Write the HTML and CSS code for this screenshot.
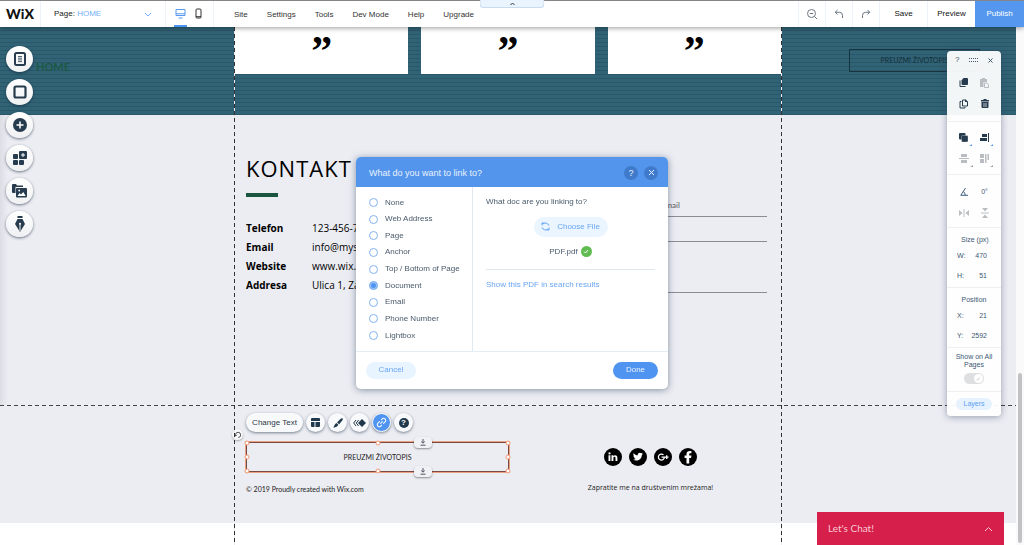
FILE: index.html
```html
<!DOCTYPE html>
<html lang="en">
<head>
<meta charset="utf-8">
<title>Wix Editor</title>
<link rel="stylesheet" href="styles.css">
</head>
<body>
<header class="topbar">
  <a class="logo" href="#">WiX</a>
  <button class="page-picker"><span><b>Page:</b> HOME</span>
    <svg width="8" height="5" viewBox="0 0 8 5"><path d="M1 1l3 3 3-3" class="line"/></svg></button>
  <div class="devices">
    <button class="device active" aria-label="Desktop"><svg width="11" height="11" viewBox="0 0 11 11"><path d="M1 1.5h9v6H1zM1 5.8h9M3.5 10h4" class="line"/></svg></button>
    <button class="device" aria-label="Mobile"><svg width="7" height="11" viewBox="0 0 7 11"><rect x="1" y="1" width="5" height="9" rx="1" class="line"/><path d="M1 8.7h5" class="line"/></svg></button>
  </div>
  <nav class="menu">
    <a href="#">Site</a><a href="#">Settings</a><a href="#">Tools</a><a href="#">Dev Mode</a><a href="#">Help</a><a href="#">Upgrade</a>
  </nav>
  <div class="actions">
    <button class="icon-action" aria-label="Zoom out"><svg width="12" height="12" viewBox="0 0 12 12"><circle cx="5.5" cy="5.5" r="4" class="line"/><path d="M8.5 8.5l2.5 2.5M3.8 5.5h3.4" class="line"/></svg></button>
    <button class="icon-action" aria-label="Undo"><svg width="10" height="10" viewBox="0 0 10 10"><path d="M3.5 1L1.2 3.3l2.3 2.2M1.5 3.3h4Q8.5 3.3 8.5 6.3V9" class="line"/></svg></button>
    <button class="icon-action" aria-label="Redo"><svg width="10" height="10" viewBox="0 0 10 10"><path d="M6.5 1l2.3 2.3-2.3 2.2M8.5 3.3h-4Q1.5 3.3 1.5 6.3V9" class="line"/></svg></button>
    <button class="text-action">Save</button>
    <button class="text-action">Preview</button>
    <button class="publish">Publish</button>
  </div>
  <button class="pull-tab" aria-label="Collapse"><svg width="6" height="4" viewBox="0 0 6 4"><path d="M1 3l2-2 2 2" class="line"/></svg></button>
</header>

<div class="workspace">
  <main class="site">
    <section class="band">
      <div class="band-left"><a class="home" href="#">HOME</a></div>
      <div class="quotes"><div class="quote">”</div><div class="quote">”</div><div class="quote">”</div></div>
      <div class="band-right"><a class="cv" href="#">PREUZMI ŽIVOTOPIS</a></div>
    </section>

    <section class="contact">
      <div class="contact-inner">
        <div>
          <h1 class="title">KONTAKT</h1>
          <div class="bar"></div>
          <dl class="details">
            <dt>Telefon</dt><dd>123-456-7890</dd>
            <dt>Email</dt><dd>info@mysite.com</dd>
            <dt>Website</dt><dd>www.wix.com</dd>
            <dt>Addresa</dt><dd>Ulica 1, Zagreb</dd>
          </dl>
        </div>
        <form class="form">
          <input class="field half" aria-label="Email" placeholder="Email">
          <input class="field" aria-label="Subject">
          <textarea class="field area" aria-label="Message"></textarea>
        </form>
      </div>
    </section>

    <footer class="foot">
      <div class="foot-inner">
        <div class="foot-left">
          <div class="tools">
            <button class="pill-tool">Change Text</button>
            <button class="round" aria-label="Layout"><svg width="9" height="9" viewBox="0 0 9 9"><path d="M1 0h7a1 1 0 0 1 1 1v2H0V1a1 1 0 0 1 1-1zM0 4h3.5v5H1a1 1 0 0 1-1-1zM4.5 4H9v4a1 1 0 0 1-1 1H4.5z"/></svg></button>
            <button class="round" aria-label="Design"><svg width="10" height="10" viewBox="0 0 10 10"><path d="M9.6.4c.5.5.3 1.200-.2 1.900L6.200 6.200 4 4.400 7.700.7C8.400.1 9.100 0 9.600.4zM3.400 5l2 1.700C4.800 8.300 3 9.200.2 9.800 1.200 8.600 1.500 5.700 3.400 5z"/></svg></button>
            <button class="round" aria-label="Animation"><svg width="13" height="8" viewBox="0 0 13 8"><path d="M9 0l4 4-4 4-4-4z"/><path d="M3 1L.7 4 3 7M5.6 1L3.3 4l2.300 3" class="line"/></svg></button>
            <button class="round on" aria-label="Link"><svg width="11" height="11" viewBox="0 0 11 11"><g transform="rotate(-45 5.5 5.5)" class="line"><path d="M5 3.500H2.500a2 2 0 0 0 0 4H4M6 7.500h2.500a2 2 0 0 0 0-4H7M3.800 5.500h3.400"/></g></svg></button>
            <button class="round" aria-label="Help"><span class="help-dot">?</span></button>
          </div>
          <div class="selected">
            <a class="selected-link" href="#">PREUZMI ŽIVOTOPIS</a>
            <i class="knob tl"></i><i class="knob tc"></i><i class="knob tr"></i><i class="knob ml"></i><i class="knob mr"></i><i class="knob bl"></i><i class="knob bc"></i><i class="knob br"></i>
            <button class="stretch up" aria-label="Attach top"><svg width="6" height="7" viewBox="0 0 6 7"><path d="M3 0v4M1.200 2.500L3 4.200l1.800-1.700M.5 6.200h5" class="line"/></svg></button>
            <button class="stretch down" aria-label="Attach bottom"><svg width="6" height="7" viewBox="0 0 6 7"><path d="M3 0v4M1.200 2.500L3 4.200l1.800-1.700M.5 6.200h5" class="line"/></svg></button>
            <button class="rotate" aria-label="Rotate"><svg width="8" height="8" viewBox="0 0 8 8"><path d="M1.500 5V3.800a2.600 2.600 0 1 1 2.800 2.700M.3 3.800l1.200 1.400 1.300-1.400" class="line"/></svg></button>
          </div>
          <p class="copy">© 2019 Proudly created with Wix.com</p>
        </div>
        <div class="foot-right">
          <div class="social">
            <a class="soc" href="#" aria-label="LinkedIn"><svg width="18" height="18" viewBox="0 0 18 18"><path d="M4.500 7.300h1.900V13H4.500zM7.500 7.300h1.800v.8c.9-1.400 4.100-1.300 4.100 1.500V13h-1.900V10c0-1.600-2.100-1.400-2.100 0v3H7.500z"/><circle cx="5.500" cy="5.400" r="1.100"/></svg></a>
            <a class="soc" href="#" aria-label="Twitter"><svg width="18" height="18" viewBox="0 0 18 18"><path d="M4.600 5.200c1.100 1.300 2.500 2 4.200 2.100-.5-2.200 2-3.500 3.500-2l1.400-.5-.9 1.200 1.200-.3-1.200 1.200c.1 4-4.400 7.200-8.800 4.900 1.100.1 2-.2 2.800-.8-.9-.1-1.500-.6-1.800-1.400h.8C4.900 9.200 4.400 8.500 4.400 7.500l.8.3c-.9-.7-1.100-1.700-.6-2.600z"/></svg></a>
            <a class="soc" href="#" aria-label="Google Plus"><svg width="18" height="18" viewBox="0 0 18 18"><path d="M9.500 6.900a3 3 0 1 0 .9 2.300H7.500M12.700 7.300v3.600M10.900 9.100h3.600" fill="none" stroke="#fff" stroke-width="1.300"/></svg></a>
            <a class="soc" href="#" aria-label="Facebook"><svg width="18" height="18" viewBox="0 0 18 18"><path d="M7.500 15.500V10H5.600V7.600h1.900V6.200c0-2.700 1.700-3.700 4.900-3.200v2.200c-1.500-.1-2.200-.1-2.200 1.100v1.300h2.200L12.100 10h-1.900v5.500z"/></svg></a>
          </div>
          <p class="follow">Zapratite me na društvenim mrežama!</p>
        </div>
      </div>
    </footer>
    <div class="below"></div>
    <div class="guides"></div>
  </main>
  <div class="scroll"><div class="thumb"></div></div>
</div>

<aside class="side">
  <button class="side-btn" aria-label="Pages"><svg width="14" height="14" viewBox="0 0 14 14"><rect x="2" y="1" width="10" height="12" rx="1.5" fill="none" stroke="currentColor" stroke-width="2"/><path d="M5 4.500h4M5 6.200h4M5 7.900h4M5 9.600h4" stroke="currentColor" stroke-width=".8"/></svg></button>
  <button class="side-btn" aria-label="Background"><svg width="14" height="14" viewBox="0 0 14 14"><rect x="1.500" y="1.500" width="11" height="11" rx="1.5" fill="none" stroke="currentColor" stroke-width="2.200"/></svg></button>
  <button class="side-btn" aria-label="Add"><svg width="14" height="14" viewBox="0 0 14 14"><circle cx="7" cy="7" r="7"/><path d="M7 3.500v7M3.500 7h7" stroke="#fff" stroke-width="1.500"/></svg></button>
  <button class="side-btn" aria-label="Apps"><svg width="14" height="14" viewBox="0 0 14 14"><rect y="3" width="5" height="5" rx="1"/><rect y="9" width="5" height="5" rx="1"/><rect x="6" y="9" width="5" height="5" rx="1"/><rect x="6" width="8" height="8" rx="1"/><path d="M10 2v4M8 4h4" stroke="#fff"/></svg></button>
  <button class="side-btn" aria-label="Media"><svg width="15" height="14" viewBox="0 0 15 14"><path d="M0 1a1 1 0 0 1 1-1h3l1 1.500h6V3H3.500v6H1a1 1 0 0 1-1-1z"/><rect x="4" y="4" width="11" height="9.500" rx="1"/><path d="M5.500 12l2.200-3 1.300 1.500L11.300 8l2.400 4z" fill="#fff"/><circle cx="7.200" cy="6.500" r=".9" fill="#fff"/></svg></button>
  <button class="side-btn" aria-label="Blog"><svg width="10" height="16" viewBox="0 0 10 16"><path d="M2.500 0h5v2h-5zM2.500 3h5L10 8l-5 8-5-8z"/><path d="M5 15V8" stroke="#fff" stroke-width=".9"/><circle cx="5" cy="7.700" r="1" fill="#fff"/></svg></button>
</aside>

<aside class="panel">
  <div class="panel-head"><button aria-label="Help">?</button>
    <svg width="9" height="4" viewBox="0 0 9 4"><path d="M0 .5h9M0 3.500h9" stroke="currentColor" stroke-dasharray="1 1"/></svg>
    <button aria-label="Close"><svg width="5" height="5" viewBox="0 0 5 5"><path d="M.5.5l4 4M4.500.5l-4 4" class="line"/></svg></button></div>
  <div class="panel-grid first">
    <button aria-label="Copy"><svg width="9" height="10" viewBox="0 0 9 10"><path d="M1 2.500v6h5.500" class="line"/><path d="M2.500 2.500L4.500 0H8a1 1 0 0 1 1 1v5a1 1 0 0 1-1 1H3.500a1 1 0 0 1-1-1z"/></svg></button>
    <button class="off" aria-label="Paste"><svg width="9" height="10" viewBox="0 0 9 10"><path d="M0 1h2V0h3v1h2v3H3.500v5H0z"/><path d="M4.500 5H7l1.500 1.500v3h-4z" class="line"/></svg></button>
    <button aria-label="Duplicate"><svg width="9" height="10" viewBox="0 0 9 10"><path d="M3.500 1H6.500l2 2v4h-5zM2.500 2.500H1v6.500h5V8" class="line"/><path d="M6 0l3 3H6z"/></svg></button>
    <button aria-label="Delete"><svg width="8" height="9" viewBox="0 0 8 9"><path d="M0 1h2.500V0h3v1H8v1.500H0zM.5 3h7v5a1 1 0 0 1-1 1h-5a1 1 0 0 1-1-1z"/><path d="M3 4v4M5 4v4" stroke="#fff" stroke-width=".7"/></svg></button>
  </div>
  <div class="panel-grid">
    <button class="more" aria-label="Arrange"><svg width="9" height="9" viewBox="0 0 9 9"><rect width="6.500" height="6.500" rx="1"/><rect x="2.500" y="2.500" width="6.500" height="6.500" rx="1" stroke="#fff" stroke-width=".3"/></svg></button>
    <button class="more" aria-label="Align"><svg width="9" height="9" viewBox="0 0 9 9"><path d="M8 0h1v9H8zM2 1h5v3H2zM0 5h7v3H0z"/></svg></button>
    <button class="more off" aria-label="Distribute"><svg width="10" height="9" viewBox="0 0 10 9"><path d="M2 0h6v3H2zM0 4h10v1H0zM2 6h6v3H2z"/></svg></button>
    <button class="more off" aria-label="Match size"><svg width="9" height="9" viewBox="0 0 9 9"><path d="M0 0h4v4H0zM0 5h4v4H0zM5 0h1.500v9H5zM7.500 0H9v6H7.500z"/></svg></button>
  </div>
  <div class="panel-grid">
    <button class="blue" aria-label="Angle"><svg width="8" height="8" viewBox="0 0 8 8"><path d="M5.500 0L.8 7.300H8M3.300 3.500q2 1.500 1.800 3.700" class="line"/></svg></button>
    <input class="num" aria-label="Rotation" value="0°">
    <button class="off" aria-label="Flip horizontal"><svg width="10" height="8" viewBox="0 0 10 8"><path d="M0 1l3.500 3L0 7zM10 1L6.500 4 10 7zM4.500 0h1v8h-1z"/></svg></button>
    <button class="off" aria-label="Flip vertical"><svg width="8" height="10" viewBox="0 0 8 10"><path d="M1 0h6L4 3.500zM1 10h6L4 6.500zM0 4.500h8v1H0z"/></svg></button>
  </div>
  <div class="panel-box"><div class="panel-title">Size (px)</div>
    <label>W:<input class="num" value="470"></label><label>H:<input class="num" value="51"></label></div>
  <div class="panel-box"><div class="panel-title">Position</div>
    <label>X:<input class="num" value="21"></label><label>Y:<input class="num" value="2592"></label></div>
  <div class="panel-show"><label for="all-pages">Show on All Pages</label><input class="toggle" type="checkbox" id="all-pages"></div>
  <div class="panel-foot"><button class="layers">Layers</button></div>
</aside>

<div class="overlay">
  <div class="dialog" role="dialog" aria-labelledby="dialog-title">
    <div class="dialog-head"><span id="dialog-title">What do you want to link to?</span>
      <button class="dot" aria-label="Help">?</button>
      <button class="dot" aria-label="Close"><svg width="7" height="7" viewBox="0 0 7 7"><path d="M1 1l5 5M6 1L1 6" class="line"/></svg></button></div>
    <div class="dialog-body">
      <div class="choices">
        <label><input type="radio" name="t">None</label>
        <label><input type="radio" name="t">Web Address</label>
        <label><input type="radio" name="t">Page</label>
        <label><input type="radio" name="t">Anchor</label>
        <label><input type="radio" name="t">Top / Bottom of Page</label>
        <label><input type="radio" name="t" checked>Document</label>
        <label><input type="radio" name="t">Email</label>
        <label><input type="radio" name="t">Phone Number</label>
        <label><input type="radio" name="t">Lightbox</label>
      </div>
      <div class="doc">
        <div class="doc-q">What doc are you linking to?</div>
        <button class="choose"><svg width="9" height="9" viewBox="0 0 9 9"><path d="M1 3.500V1h2.500M1 1l1 1a3.600 3.600 0 0 1 5.900 1.600M8 5.500V8H5.500M8 8L7 7A3.600 3.600 0 0 1 1.100 5.400" class="line"/></svg>Choose File</button>
        <div class="file">PDF.pdf<span class="ok"><svg width="6" height="5" viewBox="0 0 6 5"><path d="M1 2.500L2.500 4 5 1" class="line"/></svg></span></div>
        <a class="show" href="#">Show this PDF in search results</a>
      </div>
    </div>
    <div class="dialog-foot"><button class="btn cancel">Cancel</button><button class="btn done">Done</button></div>
  </div>
</div>

<button class="chat">Let's Chat!<svg width="9" height="6" viewBox="0 0 9 6"><path d="M1 5l3.500-3.500L8 5" class="line"/></svg></button>
</body>
</html>
```

FILE: styles.css
```css
* { box-sizing: border-box; }
body { margin: 0; min-height: 100vh; display: flex; flex-direction: column; font: 8px/14px "Liberation Sans", sans-serif; color: #2b3a48; background: #fff; overflow: hidden; }
button { border: 0; padding: 0; background: none; font: inherit; color: inherit; display: flex; align-items: center; justify-content: center; }
a { color: inherit; text-decoration: none; }
p, h1, dl, dd { margin: 0; }
svg { display: block; fill: currentColor; flex: none; }
.line { fill: none; stroke: currentColor; }

/* top bar */
.topbar { position: relative; z-index: 3; display: flex; height: 27px; border-top: 1px solid #858589; background: #fff; box-shadow: 0 1px 5px rgba(0, 0, 0, .4); }
.logo { width: 41px; border-right: 1px solid #edf3f8; font: 900 14px/26px Lato, sans-serif; color: #111; text-align: center; }
.page-picker { width: 125px; padding: 0 13px; justify-content: space-between; border-right: 1px solid #edf3f8; color: #75b0f8; }
.page-picker b { font-weight: 400; color: #222; }
.devices { display: flex; gap: 5px; width: 48px; padding-left: 8px; border-right: 1px solid #edf3f8; }
.device { width: 13px; border-bottom: 2px solid transparent; color: #333; }
.device.active { border-color: #4c94f2; color: #5899f0; }
.menu { display: flex; gap: 19px; padding-left: 20px; line-height: 27px; color: #333; }
.actions { display: flex; margin-left: auto; }
.icon-action { width: 27px; border-left: 1px solid #edf3f8; color: #6a7682; }
.text-action { width: 48px; border-left: 1px solid #edf3f8; color: #111; }
.publish { width: 49px; background: #5597ee; color: #fff; }
.pull-tab { position: absolute; top: -1px; left: 50%; width: 65px; height: 8px; transform: translateX(-50%); border: 1px solid #c9dcf0; border-top: 0; border-radius: 0 0 4px 4px; background: #eaf4fe; }

/* site canvas */
.workspace { flex: 1; display: flex; }
.site { position: relative; flex: 1; display: flex; flex-direction: column; }
.band { display: grid; grid-template-columns: 1fr 546px 1fr; height: 88px; background: repeating-linear-gradient(#316376 0 3px, #2b5869 3px 4px); }
.band-left { padding: 32px 0 0 36px; }
.home { font: bold 11px/16px Lato, sans-serif; color: #1b5946; }
.quotes { display: grid; grid-template-columns: 1fr 1fr 1fr; gap: 13px; align-items: start; }
.quote { height: 47px; padding-top: 1px; background: #fff; color: #000; text-align: center; font: bold 42px/46px "Liberation Serif", serif; }
.band-right { padding: 22px 0 0 68px; }
.cv { display: block; width: 131px; border: 1px solid #173340; color: #14303b; text-align: center; font: 7px/21px Lato, sans-serif; }
.contact { padding: 38px 0 110px; background: linear-gradient(90deg, #dcdee5, #ecedf3 8px); }
.contact-inner { width: 546px; margin: auto; padding: 0 14px 0 11px; display: grid; grid-template-columns: 1fr 246px; }
.title { font: 400 22px/30px "Open Sans", sans-serif; letter-spacing: 1px; color: #000; }
.bar { width: 32px; height: 4px; margin: 10px 0 22px; background: #1b5540; }
.details { display: grid; grid-template-columns: 66px 1fr; font: 10px/19px "Open Sans", sans-serif; color: #000; }
.details dt { font-weight: 700; }
.form { display: flex; flex-direction: column; padding-top: 40px; }
.field { width: 100%; height: 25px; padding: 0; border: 0; border-bottom: 1px solid #8b8d93; background: none; font: 8px/14px Lato, sans-serif; resize: none; }
.field.half { width: 106px; height: 24px; align-self: flex-end; }
.field.area { height: 51px; }
.field::placeholder { color: #555; }
.foot { background: #ecedf3; }
.foot::before { content: ""; display: block; height: 1px; background: repeating-linear-gradient(90deg, #444 0 4px, #ecedf3 4px 7px); }
.foot-inner { width: 546px; margin: auto; padding: 7px 0 26px 11px; display: grid; grid-template-columns: 263px 1fr; }
.tools { display: flex; gap: 3px; margin-bottom: 10px; }
.pill-tool, .round { height: 19px; border-radius: 10px; background: #f8f9fb; box-shadow: 0 1px 3px rgba(20, 40, 60, .55); }
.pill-tool { width: 57px; }
.round { width: 19px; color: #20384b; }
.round.on { background: #4e94f0; color: #fff; border: 1px solid #fff; }
.help-dot { width: 10px; border-radius: 5px; background: #20384b; color: #fff; font: bold 8px/10px "Liberation Sans", sans-serif; }
.selected { position: relative; border: 1px solid #7a4a40; outline: 1px solid #e9a184; height: 30px; text-align: center; font: 7px/28px Lato, sans-serif; color: #222; }
.knob { position: absolute; width: 5px; height: 5px; border: 1px solid #f19a74; border-radius: 3px; background: #fff; transform: translate(-50%, -50%); }
.tl, .tc, .tr { top: 0; }
.ml, .mr { top: 50%; }
.bl, .bc, .br { top: 100%; }
.tl, .ml, .bl { left: 0; }
.tc, .bc { left: 50%; }
.tr, .mr, .br { left: 100%; }
.stretch { position: absolute; left: 167px; width: 18px; height: 11px; border-radius: 4px; background: #f0f1f4; box-shadow: 0 1px 2px rgba(0, 0, 0, .4); color: #556; }
.stretch.up { top: -6px; }
.stretch.down { bottom: -6px; }
.rotate { position: absolute; left: -15px; top: -14px; width: 11px; height: 11px; border-radius: 6px; background: #f8f8fa; box-shadow: 0 1px 2px rgba(0, 0, 0, .3); color: #555; }
.copy { margin-top: 9px; font: 7px/16px Lato, sans-serif; color: #222; }
.foot-right { padding-top: 35px; width: 283px; text-align: center; color: #222; }
.social { display: flex; gap: 7px; justify-content: center; }
.soc { border-radius: 50%; background: #000; color: #fff; }
.follow { margin-top: 14px; font: 7px/16px "Open Sans", sans-serif; }
.below { flex: 1; background: #fff; }
.guides { position: absolute; inset: 0; width: 548px; margin: auto; background: repeating-linear-gradient(#333 0 4px, #e8e9ee 4px 7px) left / 1px 100% no-repeat, repeating-linear-gradient(#333 0 4px, #e8e9ee 4px 7px) right / 1px 100% no-repeat; pointer-events: none; }
.scroll { width: 8px; padding: 346px 2px 2px; display: flex; background: #fafafb; }
.thumb { flex: 1; border-radius: 2px; background: #c2c2c4; }

/* floating tool buttons */
.side { position: absolute; z-index: 2; left: 6px; top: 46px; display: flex; flex-direction: column; gap: 7px; }
.side-btn { width: 27px; height: 26px; border-radius: 50%; background: linear-gradient(#fff, #eff0f2); color: #263c4e; box-shadow: 0 1px 3px rgba(10, 30, 50, .6); }

/* inspector */
.panel { position: absolute; z-index: 2; right: 23px; top: 51px; width: 54px; border-radius: 4px; background: rgba(255, 255, 255, .94); box-shadow: 0 1px 7px rgba(40, 60, 90, .45); color: #263c4e; text-align: center; }
.panel-head { display: flex; justify-content: space-between; align-items: center; height: 18px; padding: 0 8px; color: #456; }
.panel-grid { display: grid; grid-template-columns: 21px 21px; justify-content: center; height: 53px; padding: 5px 0; border-bottom: 1px solid #edeff2; }
.panel-grid.first { height: 53px; padding: 4px 0 7px; }
.panel-grid > * { justify-self: center; align-self: center; }
.off { color: #b9bdc1; }
.blue { color: #3f5f7f; }
.more { position: relative; }
.more::after { content: ""; position: absolute; right: -4px; bottom: -4px; border: 1px solid; border-color: transparent #4e94f0 #4e94f0 transparent; border-width: 1px 1px 1px 2px; }
.more.off::after { border-color: transparent #999 #999 transparent; }
.num { width: 21px; padding: 0; border: 0; background: none; font: 7px/14px "Liberation Sans", sans-serif; color: #3c5872; text-align: right; }
.panel-grid .num { text-align: center; }
.panel-box { padding: 5px 14px 4px 10px; border-bottom: 1px solid #edeff2; font: 7px/14px "Liberation Sans", sans-serif; color: #3c5872; }
.panel-box label { display: flex; justify-content: space-between; line-height: 14px; }
.panel-box label + label { margin-top: 6px; }
.panel-title { white-space: nowrap; margin-bottom: 2px; padding-left: 4px; }
.panel-show { display: flex; flex-direction: column; align-items: center; gap: 4px; padding: 5px 6px 7px; border-bottom: 1px solid #edeff2; font: 7px/8px "Liberation Sans", sans-serif; color: #3c5872; }
.toggle { appearance: none; position: relative; margin: 0; width: 20px; height: 11px; border-radius: 6px; background: #dedfe1; }
.toggle::after { content: "✓"; position: absolute; right: 1px; top: 1px; width: 9px; border-radius: 5px; background: #fff; font: 6px/9px "DejaVu Sans", sans-serif; color: #bbb; text-align: center; }
.panel-foot { padding: 6px 9px; }
.layers { width: 100%; height: 12px; border-radius: 6px; background: #e6f3ff; color: #5d9eef; font-size: 7px; }

/* link dialog */
.overlay { position: fixed; inset: 0; z-index: 4; display: flex; align-items: center; justify-content: center; pointer-events: none; }
.dialog { width: 312px; border-radius: 5px; overflow: hidden; background: #fff; box-shadow: 0 1px 7px rgba(30, 50, 80, .5); pointer-events: auto; }
.dialog-head { display: flex; align-items: center; gap: 6px; height: 30px; padding: 2px 10px 0 13px; background: #5395ec; color: #e9f2fd; font-size: 9px; }
.dialog-head span { flex: 1; }
.dot { width: 14px; height: 14px; border-radius: 50%; background: #3f7bca; }
.dialog-body { display: grid; grid-template-columns: 117px 1fr; border-bottom: 1px solid #e2edf6; color: #4a5b6b; }
.choices { display: flex; flex-direction: column; justify-content: space-between; min-height: 164px; padding: 9px 0 8px 13px; border-right: 1px solid #e2e9ef; }
.choices label { display: flex; align-items: center; gap: 7px; }
.choices input { appearance: none; width: 9px; height: 9px; margin: 0; border: 1px solid #7fb1f2; border-radius: 50%; }
.choices input:checked { background: #4e94f0; box-shadow: inset 0 0 0 1px #a8cbf6; }
.doc { display: flex; flex-direction: column; align-items: center; padding: 8px 13px; }
.doc-q { align-self: stretch; }
.choose { gap: 7px; width: 74px; height: 20px; margin: 8px 0; border-radius: 10px; background: #eaf5ff; color: #6aa6f3; }
.file { display: flex; align-items: center; gap: 3px; align-self: stretch; justify-content: center; padding-bottom: 10px; border-bottom: 1px solid #dfe8ec; }
.ok { width: 11px; height: 11px; border-radius: 50%; display: flex; align-items: center; justify-content: center; background: #60bc50; color: #fff; }
.show { align-self: flex-start; margin-top: 8px; color: #6aa6f3; }
.dialog-foot { display: flex; justify-content: space-between; padding: 10px; }
.btn { height: 17px; border-radius: 9px; }
.cancel { width: 50px; background: #e8f4ff; color: #6aa6f3; }
.done { width: 45px; background: #4e94f0; color: #eaf3fe; }

.chat { position: fixed; z-index: 2; right: 20px; bottom: 0; width: 187px; height: 33px; padding: 0 11px; justify-content: space-between; background: #d61f4a; color: #f9c9d4; font: 10px/33px Lato, sans-serif; }
```
